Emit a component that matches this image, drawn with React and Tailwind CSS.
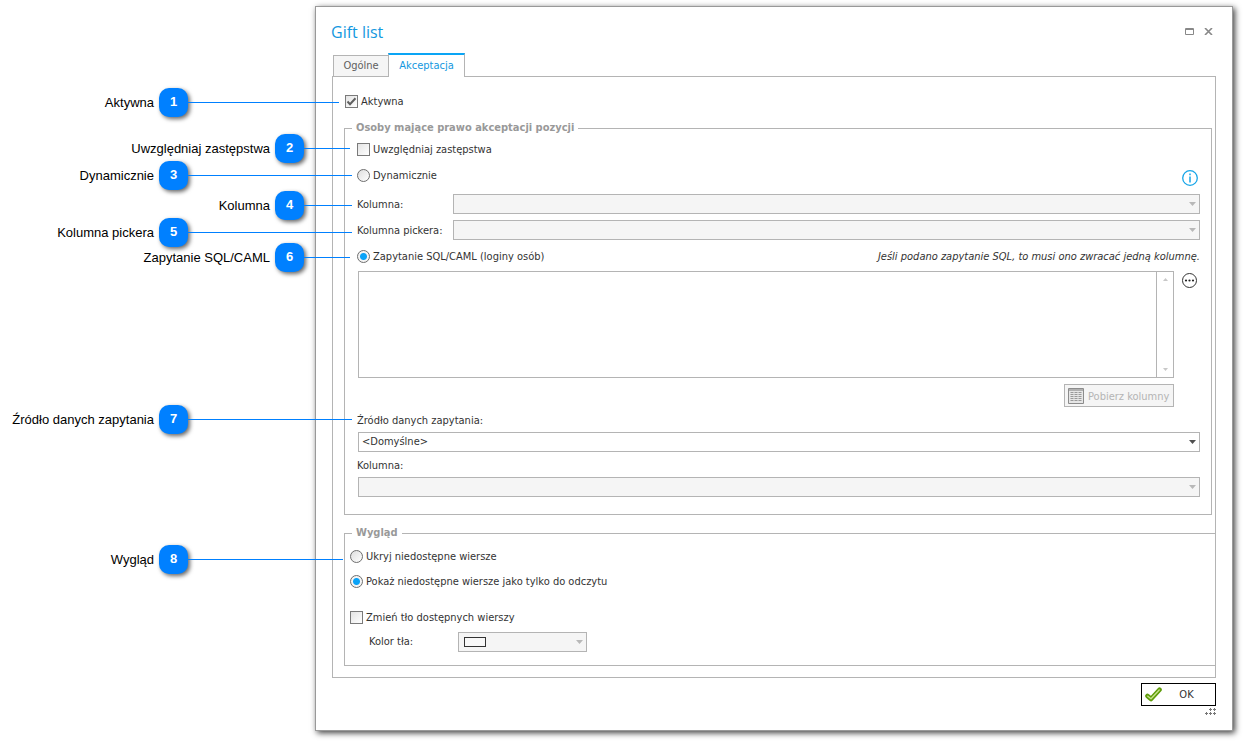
import React from "react";

const callouts = [
  { n: 1, label: "Aktywna", end: "w-[188px]", row: "w-[339px]", gap: "mt-[90px]" },
  { n: 2, label: "Uwzględniaj zastępstwa", end: "w-[304px]", row: "w-[350px]", gap: "mt-[22px]" },
  { n: 3, label: "Dynamicznie", end: "w-[188px]", row: "w-[352px]", gap: "mt-[3px]" },
  { n: 4, label: "Kolumna", end: "w-[304px]", row: "w-[352px]", gap: "mt-[6px]" },
  { n: 5, label: "Kolumna pickera", end: "w-[188px]", row: "w-[352px]", gap: "mt-[3px]" },
  { n: 6, label: "Zapytanie SQL/CAML", end: "w-[304px]", row: "w-[350px]", gap: "mt-[1px]" },
  { n: 7, label: "Źródło danych zapytania", end: "w-[188px]", row: "w-[352px]", gap: "mt-[138px]" },
  { n: 8, label: "Wygląd", end: "w-[188px]", row: "w-[343px]", gap: "mt-[116px]" },
];

function Callout({ n, label, end, row, gap }) {
  return (
    <li className={`flex h-6 items-center ${row} ${gap}`}>
      <div className={`flex shrink-0 items-center justify-end gap-[5px] ${end}`}>
        <span className="pt-0.5 text-[13px] leading-4 whitespace-nowrap text-black">{label}</span>
        <span className="flex size-[29px] shrink-0 items-center justify-center rounded-[10px] bg-[#0080ff] text-[13px] font-bold text-white shadow-[2px_2px_4px_rgba(0,0,0,0.6)]">
          {n}
        </span>
      </div>
      <span className="h-px flex-1 bg-[#0080ff]" />
    </li>
  );
}

function Check({ id, label, checked }) {
  return (
    <div className="flex h-4 items-center gap-[3px]">
      <span className="relative flex size-[13px] shrink-0">
        <input
          id={id}
          type="checkbox"
          defaultChecked={checked}
          className="peer size-[13px] appearance-none border border-[#7a7a7a] bg-linear-to-br from-[#e4e4e4] to-white"
        />
        <svg
          viewBox="0 0 13 13"
          className="pointer-events-none absolute inset-0 hidden size-[13px] peer-checked:block"
          fill="none"
          stroke="#606060"
          strokeWidth="2"
        >
          <path d="M2.5 6.5 5 9.2 10.5 3.3" />
        </svg>
      </span>
      <label htmlFor={id} className="pt-0.5 whitespace-nowrap">{label}</label>
    </div>
  );
}

function Radio({ id, name, label, checked }) {
  return (
    <div className="flex h-4 items-center gap-[3px]">
      <input
        id={id}
        name={name}
        type="radio"
        defaultChecked={checked}
        className="size-[13px] shrink-0 appearance-none rounded-full border border-[#6e6e6e] bg-linear-to-br from-[#dedede] to-white checked:bg-[radial-gradient(circle,#0aa2f7_0_3px,#f4f4f4_4px)]"
      />
      <label htmlFor={id} className="pt-0.5 whitespace-nowrap">{label}</label>
    </div>
  );
}

function Select({ id, disabled, children, className = "" }) {
  return (
    <div className={`relative flex h-5 ${className}`}>
      <select
        id={id}
        disabled={disabled}
        className="h-5 w-full appearance-none rounded-none border border-[#b4b4b4] bg-white pl-[3px] text-[#333] opacity-100 disabled:bg-[#f5f5f5]"
      >
        {children}
      </select>
      <svg
        viewBox="0 0 7 4"
        className={`pointer-events-none absolute top-2 right-1 h-1 w-[7px] ${disabled ? "fill-[#b8b8b8]" : "fill-[#505050]"}`}
      >
        <path d="M0 0h7L3.5 4z" />
      </svg>
    </div>
  );
}

function Legend({ children, className }) {
  return (
    <legend className={`h-4 px-1 font-bold text-[#999] ${className}`}>
      {children}
    </legend>
  );
}

function Approvers() {
  return (
    <fieldset className="mr-[3px] min-w-0 border border-[#b4b4b4] pr-[11px] pb-[17px] pl-3">
      <Legend className="-ml-[5px]">Osoby mające prawo akceptacji pozycji</Legend>
      <div className="mt-[5px]">
        <Check id="substitutes" label="Uwzględniaj zastępstwa" />
      </div>
      <div className="mt-[10px] flex h-[22px] items-start justify-between">
        <Radio id="dynamic" name="source" label="Dynamicznie" />
        <button type="button" aria-label="Informacja" className="mt-[3px] mr-[2px] flex">
          <svg viewBox="0 0 16 16" className="size-4" fill="none" stroke="#16a5e8">
            <circle cx="8" cy="8" r="7.3" strokeWidth="1.3" />
            <path d="M8 6.5v6M8 3.5v1.7" strokeWidth="1.5" />
          </svg>
        </button>
      </div>
      <div className="mt-[5px] grid grid-cols-[96px_1fr] items-center gap-y-[6px]">
        <label htmlFor="column" className="pt-0.5">Kolumna:</label>
        <Select id="column" disabled />
        <label htmlFor="picker" className="pt-0.5">Kolumna pickera:</label>
        <Select id="picker" disabled />
      </div>
      <div className="mt-2 flex h-4 items-center justify-between">
        <Radio id="query" name="source" label="Zapytanie SQL/CAML (loginy osób)" checked />
        <p className="pt-0.5 italic">Jeśli podano zapytanie SQL, to musi ono zwracać jedną kolumnę.</p>
      </div>
      <div className="mt-[7px] flex items-start gap-2">
        <div className="ml-px flex h-[107px] flex-1 border border-[#b4b4b4]">
          <textarea aria-label="Zapytanie SQL/CAML" className="flex-1 resize-none bg-white px-1 outline-none" />
          <div className="flex w-[17px] flex-col items-center justify-between border-l border-[#b4b4b4] py-[6px]">
            <svg viewBox="0 0 5 3" className="h-[3px] w-[5px] fill-[#c8c8c8]"><path d="M0 3h5L2.5 0z" /></svg>
            <svg viewBox="0 0 5 3" className="h-[3px] w-[5px] fill-[#c8c8c8]"><path d="M0 0h5L2.5 3z" /></svg>
          </div>
        </div>
        <button type="button" aria-label="Edytuj zapytanie" className="mt-px mr-[2px] flex">
          <svg viewBox="0 0 16 16" className="size-4">
            <circle cx="7.5" cy="8.5" r="7" fill="none" stroke="#333" />
            <circle cx="4" cy="8.5" r="1.1" fill="#222" />
            <circle cx="7.5" cy="8.5" r="1.1" fill="#222" />
            <circle cx="11" cy="8.5" r="1.1" fill="#222" />
          </svg>
        </button>
      </div>
      <div className="mt-[6px] mr-[26px] flex justify-end">
        <button
          type="button"
          disabled
          className="flex h-[23px] w-[110px] items-center gap-1 border border-[#b4b4b4] bg-[#f5f5f5] pl-[3px] text-[#b4b4b4]"
        >
          <svg viewBox="0 0 16 16" className="size-4 shrink-0">
            <path d="M.5.5h15v15H.5z" fill="#e6e6e6" stroke="#8c8c8c" />
            <path d="M1 1h14v2H1z" fill="#b0b0b0" />
            <path d="M2.5 4.5h11M2.5 6.5h11M2.5 8.5h11M2.5 10.5h11M2.5 12.5h11" stroke="#999" strokeDasharray="3 1" />
          </svg>
          <span className="pt-0.5 whitespace-nowrap">Pobierz kolumny</span>
        </button>
      </div>
      <label htmlFor="datasource" className="mt-[6px] block">Źródło danych zapytania:</label>
      <Select id="datasource" className="mt-[3px] ml-px">
        <option>&lt;Domyślne&gt;</option>
      </Select>
      <label htmlFor="result" className="mt-[6px] block">Kolumna:</label>
      <Select id="result" disabled className="mt-[3px] ml-px" />
    </fieldset>
  );
}

function Appearance() {
  return (
    <fieldset className="mt-[10px] min-w-0 border border-r-0 border-[#b4b4b4] pb-[13px] pl-[5px]">
      <Legend className="ml-[2px]">Wygląd</Legend>
      <div className="mt-[7px]">
        <Radio id="hide" name="rows" label="Ukryj niedostępne wiersze" />
      </div>
      <div className="mt-[9px]">
        <Radio id="readonly" name="rows" label="Pokaż niedostępne wiersze jako tylko do odczytu" checked />
      </div>
      <div className="mt-5">
        <Check id="background" label="Zmień tło dostępnych wierszy" />
      </div>
      <div className="mt-[7px] ml-[19px] flex items-center">
        <label htmlFor="color" className="w-[89px]">Kolor tła:</label>
        <div className="relative w-[129px]">
          <Select id="color" disabled />
          <span className="pointer-events-none absolute top-[5px] left-[6px] h-[10px] w-[22px] border border-[#333] bg-[#f8f8f8]" />
        </div>
      </div>
    </fieldset>
  );
}

export default function App() {
  return (
    <div className="flex min-h-screen items-start bg-white font-['Liberation_Sans',Arial,sans-serif]">
      <ol className="relative z-10 w-[315px] shrink-0">
        {callouts.map((c) => (
          <Callout key={c.n} {...c} />
        ))}
      </ol>
      <main className="mt-[6px] mr-[10px] min-w-0 flex-1 border border-[#999] bg-white px-4 pt-[13px] pb-[15px] font-['DejaVu_Sans_Condensed','DejaVu_Sans',sans-serif] text-[11px] leading-4 text-[#333] shadow-[2px_2px_6px_rgba(0,0,0,0.75)]">
        <header className="flex h-6 items-center justify-between">
          <h1 className="-ml-px font-['Open_Sans','Noto_Sans',sans-serif] text-base text-[#1398e0]">Gift list</h1>
          <div className="mr-[3px] mb-[2px] flex items-center gap-[10px]">
            <button type="button" aria-label="Maksymalizuj" className="flex">
              <svg viewBox="0 0 9 7" className="h-[7px] w-[9px]" fill="none" stroke="#888">
                <path d="M.5.5h8v6h-8zM1 1.5h7" />
              </svg>
            </button>
            <button type="button" aria-label="Zamknij" className="flex">
              <svg viewBox="0 0 9 7" className="h-[7px] w-[9px]" stroke="#888" strokeWidth="1.6">
                <path d="M1 0l7 7M8 0 1 7" />
              </svg>
            </button>
          </div>
        </header>
        <div role="tablist" className="mt-[9px] ml-px flex items-end">
          <button type="button" role="tab" aria-selected="false" className="h-[21px] w-[55px] border border-r-0 border-b-0 border-[#b4b4b4] bg-[#f5f5f5] text-[#606060]">
            Ogólne
          </button>
          <button type="button" role="tab" aria-selected="true" className="relative z-10 -mb-px flex h-6 w-[77px] items-center justify-center border-x border-t-2 border-x-[#b4b4b4] border-t-[#0aa5f5] bg-white text-[#1398e0]">
            Akceptacja
          </button>
        </div>
        <section className="border border-[#b4b4b4] pt-4 pb-[11px] pl-[11px]">
          <div className="ml-px">
            <Check id="active" label="Aktywna" checked />
          </div>
          <div className="mt-[11px]">
            <Approvers />
            <Appearance />
          </div>
        </section>
        <footer className="mt-[5px] flex flex-col items-end">
          <button type="button" className="flex h-[23px] w-[75px] items-center border border-black bg-white pl-[3px]">
            <svg viewBox="0 0 17 15" className="h-[15px] w-[17px] shrink-0" fill="none" strokeLinecap="round" strokeLinejoin="round">
              <path d="M2.5 9 6 12 14.5 2.8" stroke="#5f9c0a" strokeWidth="4.6" />
              <path d="M2.8 9.2 6 11.7 14.2 3" stroke="#c6e38c" strokeWidth="1.4" />
            </svg>
            <span className="flex-1 pr-1 text-center">OK</span>
          </button>
          <svg viewBox="0 0 11 7" className="mt-[2px] h-[7px] w-[11px] fill-[#777]">
            <path d="M4 1h3v1H4zM5 0h1v3H5zM8 1h3v1H8zM9 0h1v3H9zM0 5h3v1H0zM1 4h1v3H1zM4 5h3v1H4zM5 4h1v3H5zM8 5h3v1H8zM9 4h1v3H9z" />
          </svg>
        </footer>
      </main>
    </div>
  );
}
